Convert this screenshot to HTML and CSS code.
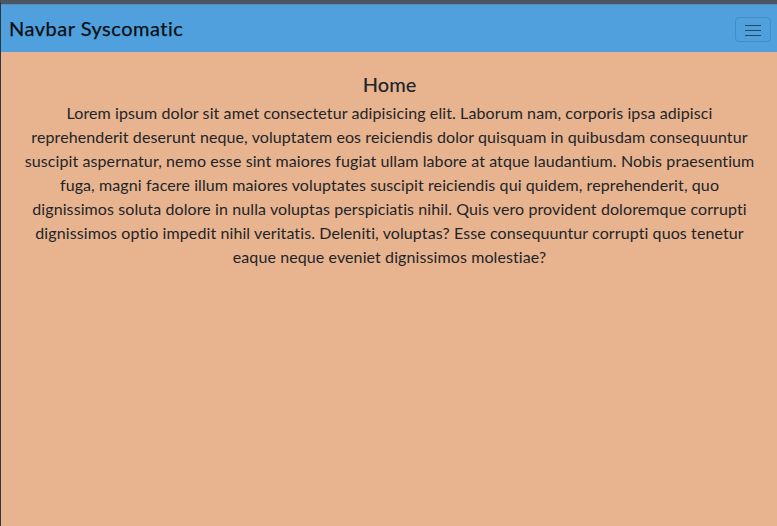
FILE: index.html
```html
<!DOCTYPE html>
<html lang="en">
<head>
<meta charset="utf-8">
<title>Navbar Syscomatic</title>
<link rel="stylesheet" href="styles.css">
</head>
<body>
<div class="app">
  <nav class="navbar">
    <a class="brand" href="#">Navbar Syscomatic</a>
    <button class="toggler" type="button" aria-label="Toggle navigation">
      <svg width="16" height="12" viewBox="0 0 16 12" aria-hidden="true">
        <path d="M0 1.5h16M0 6.5h16M0 11.5h16" stroke="rgba(0,0,0,0.55)" stroke-width="1.2" fill="none"/>
      </svg>
    </button>
  </nav>
  <main class="content">
    <h2 class="title">Home</h2>
    <p class="text">Lorem ipsum dolor sit amet consectetur adipisicing elit. Laborum nam, corporis ipsa adipisci reprehenderit deserunt neque, voluptatem eos reiciendis dolor quisquam in quibusdam consequuntur suscipit aspernatur, nemo esse sint maiores fugiat ullam labore at atque laudantium. Nobis praesentium fuga, magni facere illum maiores voluptates suscipit reiciendis qui quidem, reprehenderit, quo dignissimos soluta dolore in nulla voluptas perspiciatis nihil. Quis vero provident doloremque corrupti dignissimos optio impedit nihil veritatis. Deleniti, voluptas? Esse consequuntur corrupti quos tenetur eaque neque eveniet dignissimos molestiae?</p>
  </main>
</div>
</body>
</html>
```
FILE: styles.css
```css
* { box-sizing: border-box; }
html, body { height: 100%; }
body {
  margin: 0;
  font-family: "Lato", "Liberation Sans", sans-serif;
  color: #212529;
  background: #e8b38f;
}
.app {
  min-height: 100%;
  display: flex;
  flex-direction: column;
  border-top: 4px solid #4a5661;
  border-left: 1px solid #2c3640;
  background: #e8b38f;
}
.navbar {
  height: 48px;
  display: flex;
  align-items: center;
  justify-content: space-between;
  padding: 0 6px 2px 8px;
  background: #4fa0dc;
  border-top: 1px solid #5a8cb4;
}
.brand {
  font-size: 20px;
  line-height: 24px;
  color: #0b0f14;
  text-decoration: none;
  letter-spacing: 0.5px;
  -webkit-text-stroke: 0.25px #0b0f14;
}
.toggler {
  width: 36px;
  height: 25px;
  margin-top: 4px;
  padding: 0;
  display: flex;
  align-items: center;
  justify-content: center;
  background: transparent;
  border: 1px solid rgba(0, 0, 0, 0.12);
  border-radius: 4px;
}
.toggler svg { display: block; }
.content {
  padding: 20px 19px 0 20px;
  text-align: center;
}
.title {
  margin: 0 0 5px;
  font-size: 20px;
  line-height: 24px;
  font-weight: 500;
}
.text {
  margin: 0;
  font-size: 16px;
  line-height: 24px;
  letter-spacing: 0.1px;
}
```
